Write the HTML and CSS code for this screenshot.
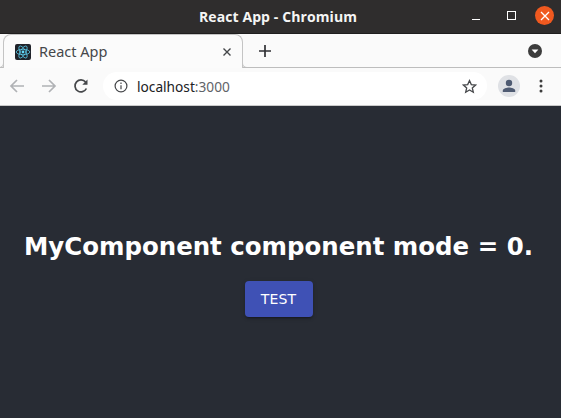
FILE: index.html
```html
<!DOCTYPE html>
<html lang="en">
<head>
    <meta charset="UTF-8">
    <title>React App</title>
    <link rel="stylesheet" href="styles.css">
</head>
<body>
    <div class="titlebar">
        <span class="title">React App - Chromium</span>
        <div class="win-btns">
            <svg class="win-min" width="8" height="2" viewBox="0 0 8 2"><rect width="8" height="1" y="1" fill="#fff"/></svg>
            <svg class="win-max" width="9" height="9" viewBox="0 0 9 9"><rect x="0.5" y="0.5" width="8" height="8" fill="none" stroke="#fff"/></svg>
            <div class="win-close">
                <svg width="10" height="10" viewBox="0 0 10 10"><path d="M1 1l8 8M9 1l-8 8" stroke="#fff" stroke-width="1.3"/></svg>
            </div>
        </div>
    </div>

    <div class="tabstrip">
        <div class="tab">
            <div class="favicon">
                <svg width="16" height="16" viewBox="0 0 16 16" fill="none" stroke="#61dafb" stroke-width="0.7">
                    <ellipse cx="8" cy="8" rx="6.8" ry="2.7"/>
                    <ellipse cx="8" cy="8" rx="6.8" ry="2.7" transform="rotate(60 8 8)"/>
                    <ellipse cx="8" cy="8" rx="6.8" ry="2.7" transform="rotate(120 8 8)"/>
                    <circle cx="8" cy="8" r="1.4" fill="#61dafb" stroke="none"/>
                </svg>
            </div>
            <span class="tab-label">React App</span>
            <svg class="tab-close" width="8" height="8" viewBox="0 0 8 8"><path d="M0.5 0.5l7 7M7.5 0.5l-7 7" stroke="#45474a" stroke-width="1.4"/></svg>
        </div>
        <svg class="new-tab" width="12" height="12" viewBox="0 0 12 12"><path d="M6 0v12M0 6h12" stroke="#303134" stroke-width="1.7"/></svg>
        <div class="tab-search">
            <svg width="14" height="14" viewBox="0 0 14 14"><circle cx="7" cy="7" r="7" fill="#3c3c3c"/><path d="M3.6 5.4h6.8L7 9.2z" fill="#fff"/></svg>
        </div>
    </div>

    <div class="toolbar">
        <svg class="nav-icon" width="16" height="16" viewBox="0 0 16 16" fill="none" stroke="#b0b2b5" stroke-width="1.7"><path d="M15 8H2M8 2L2 8l6 6"/></svg>
        <svg class="nav-icon" width="16" height="16" viewBox="0 0 16 16" fill="none" stroke="#b0b2b5" stroke-width="1.7"><path d="M1 8h13M8 2l6 6-6 6"/></svg>
        <svg class="nav-icon" width="16" height="16" viewBox="0 0 16 16" fill="none" stroke="#45474a" stroke-width="1.7"><path d="M13.4 10.5A6 6 0 1 1 12.6 4"/><path d="M14.5 1.5v5.2H9.3z" fill="#45474a" stroke="none"/></svg>
        <div class="omnibox">
            <svg width="14" height="14" viewBox="0 0 14 14" fill="none" stroke="#45474a" stroke-width="1.2"><circle cx="7" cy="7" r="5.9"/><path d="M7 6.2v4M7 3.6v1.4"/></svg>
            <span class="url">localhost<span class="url-port">:3000</span></span>
            <svg class="star" width="15" height="15" viewBox="0 0 15 15" fill="none" stroke="#45474a" stroke-width="1.3"><path d="M7.5 1.6l1.8 4 4.3.4-3.3 2.9 1 4.3-3.8-2.3-3.8 2.3 1-4.3L1.4 6l4.3-.4z"/></svg>
        </div>
        <div class="avatar">
            <svg width="14" height="14" viewBox="0 0 14 14" fill="#4f5b72"><circle cx="7" cy="4" r="3.2"/><path d="M0.8 13v-1.6c0-2 4-3 6.2-3s6.2 1 6.2 3V13z"/></svg>
        </div>
        <svg class="menu-dots" width="4" height="14" viewBox="0 0 4 14" fill="#3c3c3c"><circle cx="2" cy="2" r="1.5"/><circle cx="2" cy="7" r="1.5"/><circle cx="2" cy="12" r="1.5"/></svg>
    </div>

    <div class="app">
        <h1 class="heading">MyComponent component mode = 0.</h1>
        <button class="test-btn">TEST</button>
    </div>
</body>
</html>
```

FILE: styles.css
```css
* {
    box-sizing: border-box;
}
html, body {
    height: 100%;
}
body {
    margin: 0;
    display: flex;
    flex-direction: column;
    overflow: hidden;
    font-family: "Noto Sans", sans-serif;
    background: #282c34;
}
.titlebar {
    height: 34px;
    flex: none;
    display: flex;
    align-items: center;
    justify-content: center;
    background: #2f2d2d;
    border-bottom: 1px solid #1f1e1e;
    position: relative;
}
.title {
    font-family: "Open Sans", sans-serif;
    font-weight: 700;
    font-size: 14px;
    letter-spacing: 0.1px;
    color: #f5f5f5;
    margin-left: -5px;
}
.win-btns {
    position: absolute;
    right: 7px;
    top: 6px;
    display: flex;
    align-items: center;
}
.win-min {
    margin-top: 6px;
    margin-right: 27px;
}
.win-max {
    margin-right: 19px;
}
.win-close {
    width: 19px;
    height: 19px;
    border-radius: 50%;
    background: #f0591f;
    display: flex;
    align-items: center;
    justify-content: center;
}
.tabstrip {
    height: 34px;
    flex: none;
    display: flex;
    align-items: center;
    background: #fafafa;
    border-bottom: 1px solid #bdbdbd;
    padding-left: 3px;
}
.tab {
    width: 240px;
    height: 34px;
    display: flex;
    align-items: center;
    padding: 0 11px;
    background: #fbfbfb;
    border: 1px solid #c4c4c4;
    border-bottom: none;
    border-radius: 8px 8px 0 0;
    position: relative;
    top: 0.5px;
}
/* little flares where the tab meets the strip line */
.tab::before,
.tab::after {
    content: "";
    position: absolute;
    bottom: 0;
    width: 5px;
    height: 5px;
    border-bottom: 1px solid #bdbdbd;
}
.tab::before {
    right: 100%;
    border-right: 1px solid #c4c4c4;
    border-bottom-right-radius: 5px;
}
.tab::after {
    left: 100%;
    border-left: 1px solid #c4c4c4;
    border-bottom-left-radius: 5px;
}
.favicon {
    width: 16px;
    height: 16px;
    border-radius: 2px;
    background: #20232a;
    flex: none;
}
.favicon svg {
    display: block;
}
.tab-label {
    font-size: 14.5px;
    color: #45474a;
    margin-left: 8px;
    padding-bottom: 2px;
    flex: 1;
}
.new-tab {
    margin-left: 16px;
}
.tab-search {
    margin-left: auto;
    margin-right: 19px;
    height: 14px;
}
.tab-search svg {
    display: block;
}
.toolbar {
    height: 38px;
    flex: none;
    display: flex;
    align-items: center;
    background: #fafafa;
    border-bottom: 1px solid #c8c8c8;
    padding: 0 0 1px 9px;
    gap: 16px;
}
.omnibox {
    width: 384px;
    height: 28px;
    margin-left: -2px;
    border-radius: 14px;
    background: #fff;
    display: flex;
    align-items: center;
    padding: 0 10px 0 11px;
    gap: 9px;
}
.url {
    font-size: 13.7px;
    color: #202124;
}
.url-port {
    color: #5f6368;
}
.star {
    margin-left: auto;
}
.avatar {
    width: 22px;
    height: 22px;
    margin-left: -5px;
    border-radius: 50%;
    background: #dfe1e5;
    display: flex;
    align-items: center;
    justify-content: center;
}
.menu-dots {
    margin-left: 3px;
}
.app {
    flex: 1;
    display: flex;
    flex-direction: column;
    align-items: center;
    padding: 124px 4px 0 0;
    color: #fff;
}
.heading {
    margin: 0 0 17px;
    font-family: "DejaVu Sans", sans-serif;
    font-size: 24.45px;
    font-weight: 700;
    line-height: 34px;
    white-space: nowrap;
}
.test-btn {
    width: 68px;
    height: 36px;
    border: none;
    border-radius: 4px;
    background: #3f51b5;
    color: #fff;
    font-family: "DejaVu Sans", sans-serif;
    font-size: 14px;
    letter-spacing: 0.2px;
    box-shadow: 0 3px 1px -2px rgba(0,0,0,0.2), 0 2px 2px 0 rgba(0,0,0,0.14), 0 1px 5px 0 rgba(0,0,0,0.12);
}
```
